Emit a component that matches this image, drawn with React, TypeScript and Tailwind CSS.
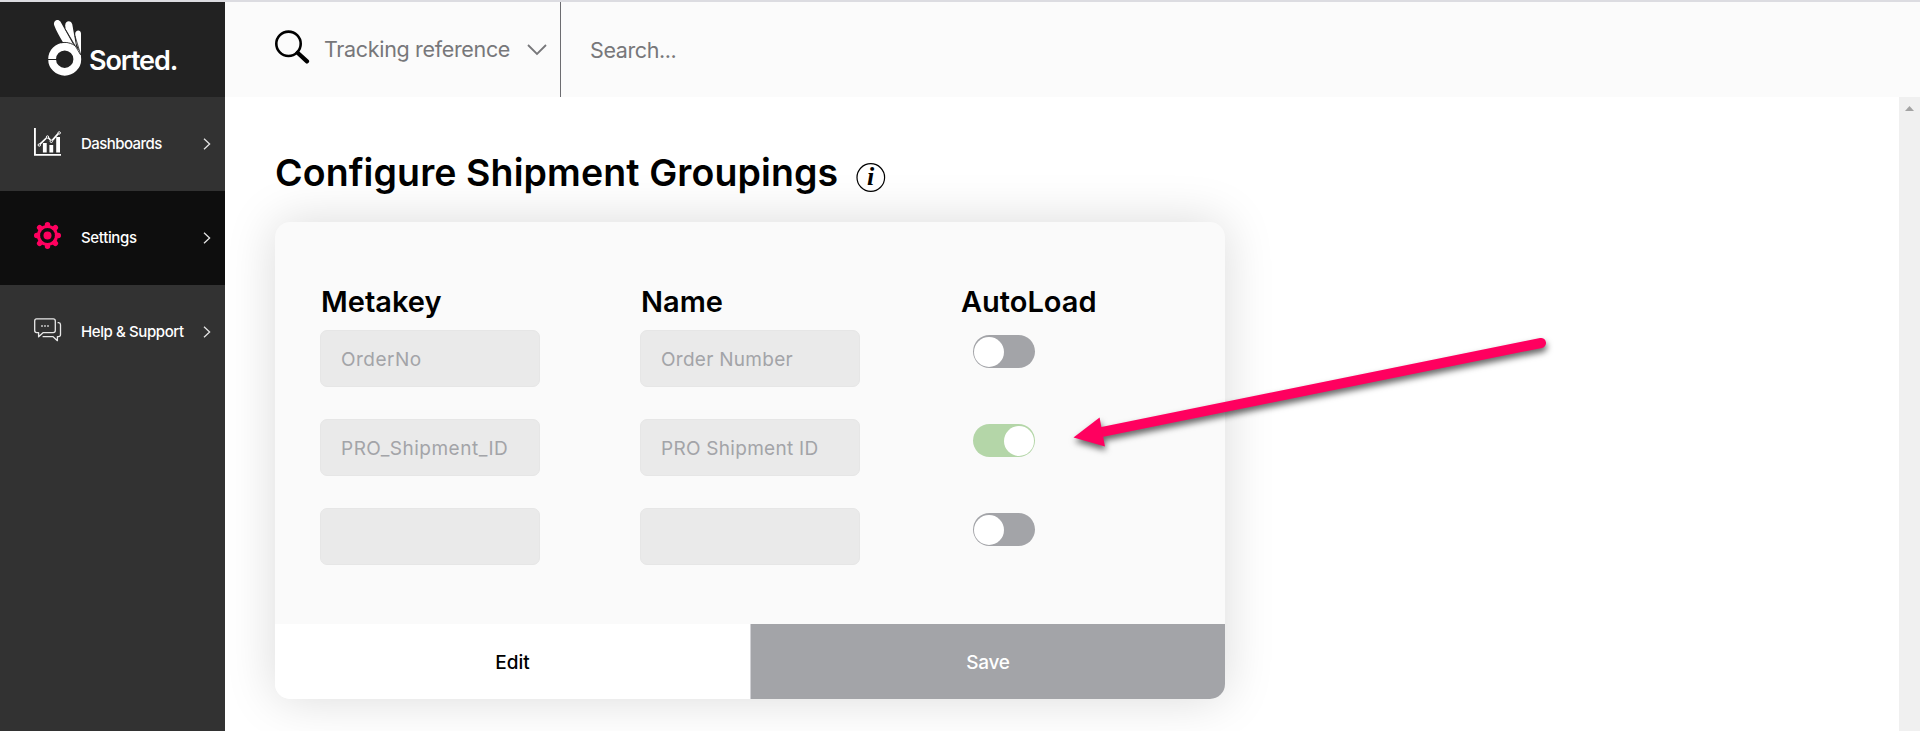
import type { ReactNode } from 'react';

function Logo() {
  return (
    <svg width="36" height="60" viewBox="47 18 36 60" className="shrink-0" aria-hidden="true">
      <circle cx="64.7" cy="59.2" r="12.6" fill="none" stroke="#fff" strokeWidth="7.8" />
      <path d="M48 59.5h9" stroke="#222" strokeWidth="1" />
      <path d="M54.2 25.2C52.8 20.6 58 18 60.4 21.6L74 46C70 43 66.5 42 62.8 42C59.8 36.5 56.2 31 54.2 25.2Z" fill="#fff" />
      <path d="M65.2 25.4C65.2 20.2 71.4 19.8 72.3 24.6L76.5 48.5L65.6 29Z" fill="#fff" />
      <path d="M75.2 34C75 29.6 81 29.2 81 33.6V57C79.6 51.5 78 47 76.6 44Z" fill="#fff" />
      <path d="M72 43L80.5 52.5V58Z" fill="#fff" />
      <path d="M65.2 29L80.4 54.6M75 36L80.8 55" stroke="#222" strokeWidth="0.8" fill="none" />
      <path d="M61 42.9C66 41.8 71 42.6 75.4 46" stroke="#222" strokeWidth="0.8" fill="none" />
    </svg>
  );
}

function ChartIcon() {
  return (
    <svg width="27" height="28" viewBox="0 0 27 28" fill="none" stroke="#fff" aria-hidden="true">
      <path d="M0.9 0V26.9H27" strokeWidth="1.9" />
      <path d="M10.8 15V24.4M17.3 17V24.4M24.1 9V24.4" strokeWidth="3.8" />
      <path d="M6 16.2L12.4 10M14.4 9.8L16.4 12M18.3 12.4L24.2 5.6" strokeWidth="1.7" />
      <circle cx="5.3" cy="17" r="1.2" />
      <circle cx="13.5" cy="9" r="1.2" />
      <circle cx="17.3" cy="13.3" r="1.2" />
      <circle cx="25.2" cy="4.9" r="1.2" />
    </svg>
  );
}

function GearIcon() {
  return (
    <svg width="27" height="27" viewBox="-13.5 -13.5 27 27" aria-hidden="true">
      <g stroke="#ff005f" strokeWidth="5.4" strokeLinecap="round">
        <path d="M0 -10.8V-9M0 10.8V9M-10.8 0H-9M10.8 0H9" />
        <path d="M-7.9 -7.9L-7 -7M7.9 -7.9L7 -7M-7.9 7.9L-7 7M7.9 7.9L7 7" />
      </g>
      <circle r="8.9" fill="none" stroke="#ff005f" strokeWidth="3.4" />
      <circle r="7.4" fill="#0e0e0e" />
      <circle r="4" fill="#ff005f" />
    </svg>
  );
}

function ChatIcon() {
  return (
    <svg width="28" height="24" viewBox="0 0 28 24" fill="none" stroke="#e8e8e8" strokeWidth="1.3" strokeLinejoin="round" aria-hidden="true">
      <path d="M2.6 0.8H19.2Q21.3 0.8 21.3 2.9V12.6Q21.3 14.7 19.2 14.7H9L4.6 18.8V14.7H2.6Q0.7 14.7 0.7 12.6V2.9Q0.7 0.8 2.6 0.8Z" />
      <path d="M23.6 4.6H24.6Q26.5 4.8 26.5 6.8V16.4Q26.5 18.5 24.4 18.6H23.4V22.7L18.8 18.6H8.6" />
      <path d="M7.2 8H8.8M10.2 8H11.8M13.2 8H14.8" strokeWidth="1.5" />
    </svg>
  );
}

function NavItem({ icon, active, children }: { icon: ReactNode; active?: boolean; children: ReactNode }) {
  return (
    <a className={`flex h-[94px] items-center pl-[34px] pr-[14px] ${active ? 'bg-[#0e0e0e]' : 'bg-[#323232]'}`}>
      <span className="flex w-[47px] pb-[5px]">{icon}</span>
      {children}
      <svg className="ml-auto" width="8" height="12" viewBox="0 0 8 12" fill="none" stroke="#e4e4e4" strokeWidth="1.3" aria-hidden="true">
        <path d="M1 0.8L6.6 6L1 11.2" />
      </svg>
    </a>
  );
}

function Field({ value, spacing }: { value: string; spacing: string }) {
  return (
    <div className={`flex h-[57px] w-[220px] items-center whitespace-nowrap rounded-[7px] border border-[#e6e6e6] bg-[#eaeaea] pl-[20px] pt-[4px] text-[19px] text-[#a3a4a8] ${spacing}`}>
      {value}
    </div>
  );
}

function Toggle({ on }: { on?: boolean }) {
  return (
    <div className={`ml-[13px] mt-[5px] flex h-[33px] w-[62px] items-center rounded-full px-px ${on ? 'justify-end bg-[#b4d6a8]' : 'bg-[#a3a4a8]'}`}>
      <div className="size-[30px] rounded-full bg-white" />
    </div>
  );
}

function Heading({ children }: { children: ReactNode }) {
  return <div className="h-[52px] whitespace-nowrap pl-px text-[29px] font-semibold leading-[48px]">{children}</div>;
}

const rows = [
  { key: 'OrderNo', name: 'Order Number', on: false },
  { key: 'PRO_Shipment_ID', name: 'PRO Shipment ID', on: true },
  { key: '', name: '', on: false },
];

export default function App() {
  return (
    <div className="relative flex h-[731px] w-full flex-col overflow-hidden border-t-2 border-[#dcdce1] bg-white font-['Inter',sans-serif] text-black">
      <div className="flex min-h-0 flex-1">
        <aside className="flex w-[225px] shrink-0 flex-col bg-[#323232] text-white">
          <div className="flex h-[95px] bg-[#222222] pl-[47px] pt-[16px]">
            <Logo />
            <span className="ml-[6px] mt-[23px] text-[27px] font-semibold leading-[40px] tracking-[-1.1px]">Sorted.</span>
          </div>
          <nav className="flex flex-col text-[15px] font-medium">
            <NavItem icon={<ChartIcon />}><span className="tracking-[-0.55px]">Dashboards</span></NavItem>
            <NavItem icon={<GearIcon />} active><span className="tracking-[-0.35px]">Settings</span></NavItem>
            <NavItem icon={<ChatIcon />}><span className="tracking-[-0.4px]">Help &amp; Support</span></NavItem>
          </nav>
        </aside>

        <div className="flex min-w-0 flex-1 flex-col">
          <header className="flex h-[95px] shrink-0 bg-[#fbfbfb] text-[21.5px] text-[#77777a]">
            <div className="flex w-[336px] items-center border-r border-[#6c6c70] pl-[50px]">
              <svg className="-mt-[5px]" width="35" height="34" viewBox="0 0 35 34" fill="none" stroke="#000" aria-hidden="true">
                <circle cx="13.5" cy="13.8" r="12.2" strokeWidth="2.6" />
                <path d="M22.6 22.8L32 31.4" strokeWidth="4.2" strokeLinecap="round" />
              </svg>
              <span className="ml-[14px] whitespace-nowrap tracking-[-0.33px]">Tracking reference</span>
              <svg className="ml-auto mr-[13px]" width="20" height="12" viewBox="0 0 20 12" fill="none" stroke="#77777a" strokeWidth="1.8" aria-hidden="true">
                <path d="M1 1L10 10L19 1" />
              </svg>
            </div>
            <div className="flex items-center pl-[29px] pt-px tracking-[-0.4px]">Search...</div>
          </header>

          <div className="flex min-h-0 flex-1">
            <main className="min-w-0 flex-1 pl-[50px] pt-[50px]">
              <div className="flex h-[75px]">
                <h1 className="w-[563px] whitespace-nowrap text-[37.5px] font-semibold leading-[52px] tracking-[0.1px]">Configure Shipment Groupings</h1>
                <svg className="ml-[18px] mt-[16px]" width="30" height="30" viewBox="0 0 30 30" aria-hidden="true">
                  <circle cx="14.8" cy="14.5" r="13.8" fill="none" stroke="#000" strokeWidth="1.2" />
                  <text x="14.7" y="22.3" textAnchor="middle" fontSize="26" fontStyle="italic" fontWeight="bold" fontFamily="Liberation Serif, serif">i</text>
                </svg>
              </div>
              <section className="flex h-[477px] w-[950px] flex-col overflow-hidden rounded-[15px] bg-[#fafafa] shadow-[0_0_50px_rgba(0,0,0,0.15)]">
                <div className="grid flex-1 auto-rows-min grid-cols-[320px_320px_1fr] pl-[45px] pt-[56px]">
                  <Heading>Metakey</Heading>
                  <Heading>Name</Heading>
                  <Heading>AutoLoad</Heading>
                  {rows.map((r, i) => (
                    <div key={i} className="col-span-3 grid h-[89px] grid-cols-subgrid items-start">
                      <Field value={r.key} spacing="tracking-[0.5px]" />
                      <Field value={r.name} spacing="tracking-[0.28px]" />
                      <Toggle on={r.on} />
                    </div>
                  ))}
                </div>
                <div className="grid h-[75px] grid-cols-2 text-[19px] font-medium">
                  <button className="bg-white pt-[4px]">Edit</button>
                  <button className="border-l border-[#d0d0d4] bg-[#a3a4a8] pt-[4px] tracking-[-0.3px] text-white">Save</button>
                </div>
              </section>
            </main>
            <div className="flex w-[21px] shrink-0 justify-center bg-[#f0f0f0] pt-[9px]">
              <svg width="9" height="5" viewBox="0 0 9 5" fill="#a3a3a3" aria-hidden="true"><path d="M0 5L4.5 0L9 5Z" /></svg>
            </div>
          </div>
        </div>
      </div>

      <svg className="pointer-events-none absolute left-[1060px] top-[318px] overflow-visible drop-shadow-[1px_4px_3px_rgba(0,0,0,0.6)]" width="500" height="140" viewBox="1060 320 500 140" aria-hidden="true">
        <path d="M1095 433.4L1541 343" stroke="#ff005f" strokeWidth="10" strokeLinecap="round" />
        <path d="M1073.5 437.5L1099.6 417.6L1105 446.5Z" fill="#ff005f" />
      </svg>
    </div>
  );
}
